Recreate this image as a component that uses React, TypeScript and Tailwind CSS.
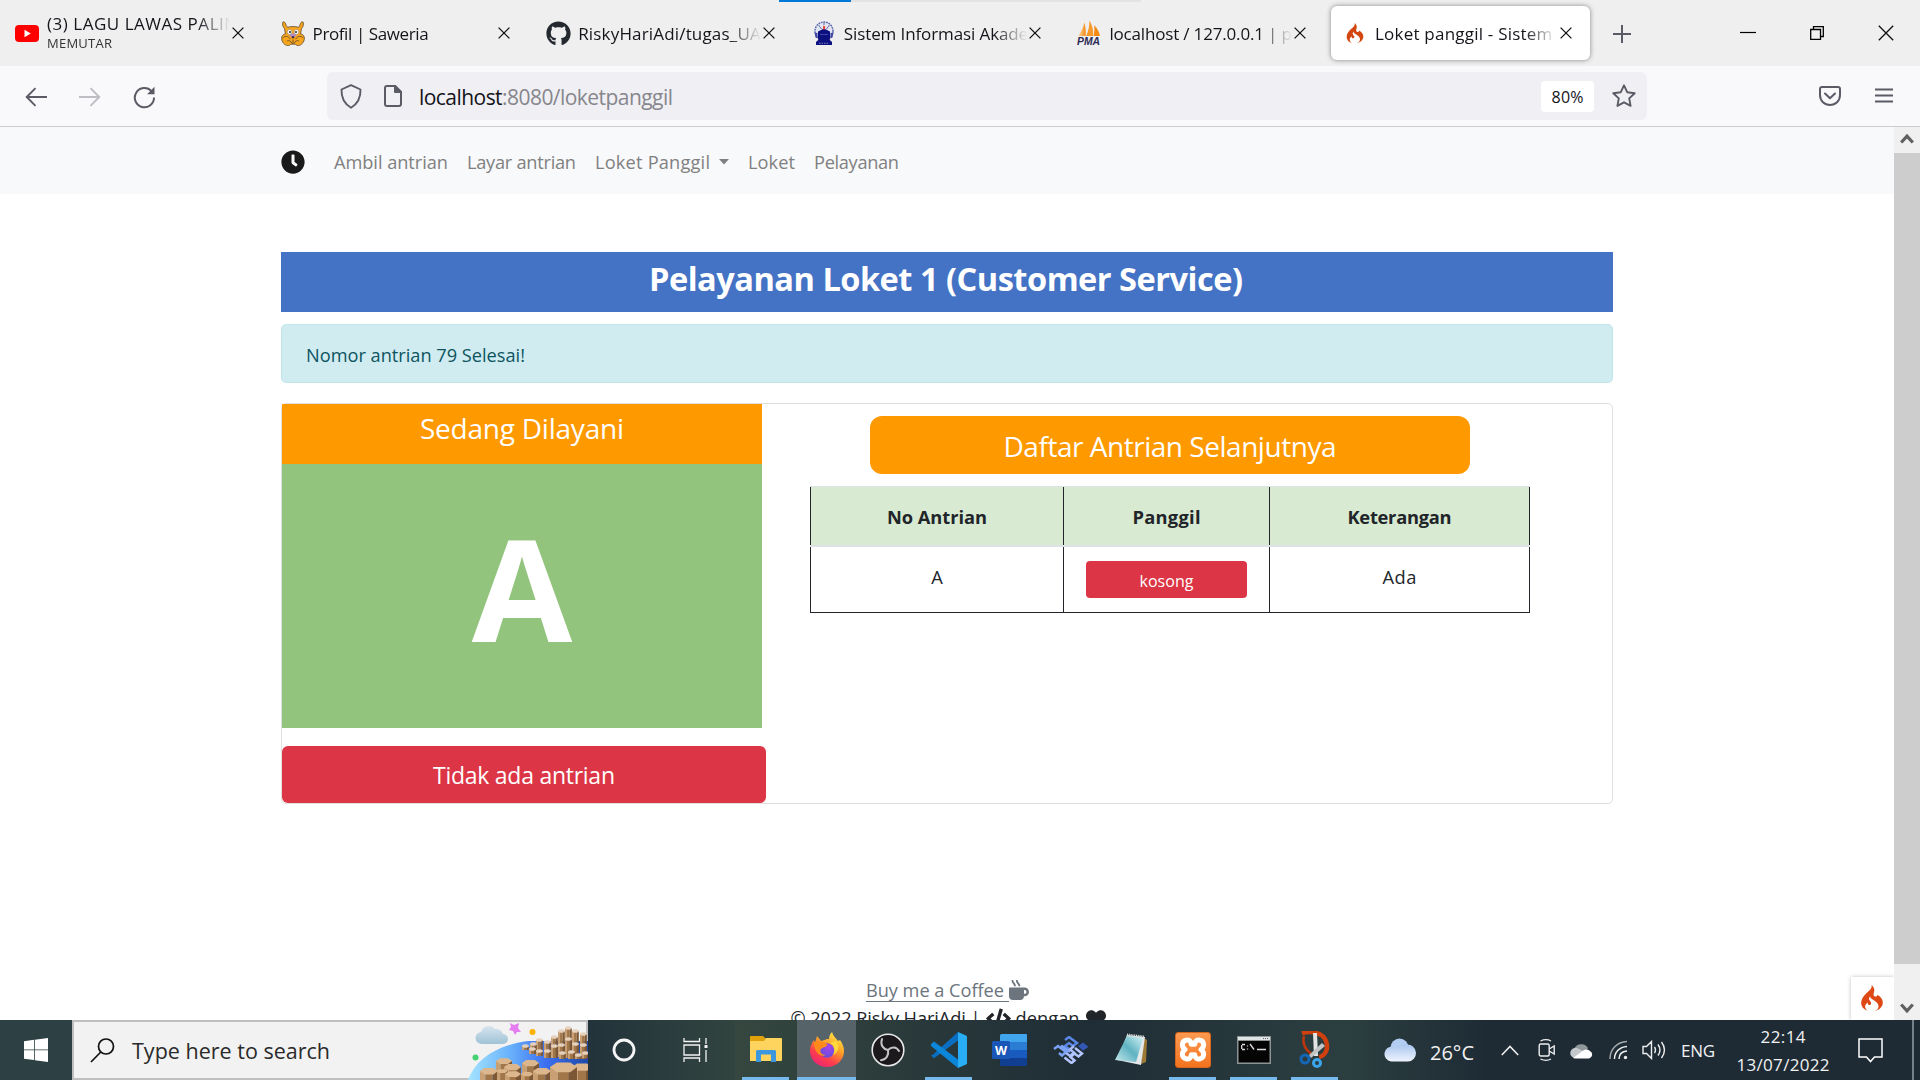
import { useLayoutEffect, useRef, type ReactNode } from "react";
import { FaClock, FaCode, FaGithub, FaHeart, FaMugHot } from "react-icons/fa";
import { SiCodeigniter } from "react-icons/si";

/** A single line of text whose tracking is adjusted so it spans `w` pixels. */
function Line({ w, className = "", children }: { w: number; className?: string; children: ReactNode }) {
  const ref = useRef<HTMLSpanElement>(null);
  useLayoutEffect(() => {
    const el = ref.current;
    if (!el) return;
    el.style.letterSpacing = "0px";
    const n = (el.textContent ?? "").length;
    const natural = el.getBoundingClientRect().width;
    if (n > 1) {
      const gap = (w - natural) / (n - 1);
      el.style.letterSpacing = `${gap}px`;
      el.style.marginRight = `${-gap}px`;
    }
  }, [w]);
  return (
    <span ref={ref} className={`inline-block whitespace-pre ${className}`}>
      {children}
    </span>
  );
}

/* ---------- Browser tabs ---------- */

function CloseX({ size = 12 }: { size?: number }) {
  return (
    <svg width={size} height={size} viewBox="0 0 12 12" fill="none" stroke="#111" strokeWidth={size > 12 ? 1 : 1.3}>
      <path d="M.6.6l10.8 10.8M11.4.6L.6 11.4" />
    </svg>
  );
}

function YoutubeIcon() {
  return (
    <svg width="24" height="17" viewBox="0 0 24 17">
      <rect width="24" height="17" rx="4" fill="#f00" />
      <path d="M9.5 4.8v7.4l6.3-3.7z" fill="#fff" />
    </svg>
  );
}

function SaweriaIcon() {
  return (
    <svg width="24" height="25" viewBox="0 0 24 25">
      <g fill="#f7a51c" stroke="#5e4a2c" strokeWidth=".8" strokeLinejoin="round">
        <path d="M1.800 1.200c1.600-1.200 2.900 1 3.400 3.300l1.300 1.800c3.300-1 7.700-1 11 0l1.300-1.800c.5-2.300 1.800-4.500 3.400-3.300.8 2.400-.4 5.200-1.800 6.600l-.8 5.200c2.400 0 3.900 2.200 3.800 4.600-.2 3.400-3 6.900-6.200 7-1.500 0-2.200-.7-3-1.400h-4.400c-.8.7-1.500 1.400-3 1.400-3.200-.1-6-3.600-6.200-7C.5 15.200 2 13 4.400 13l-.8-5.200C2.200 6.400 1 3.600 1.800 1.200z" />
        <path d="M1.800 17c2.400-2.600 5.800-2 7.600 1.200M22.200 17c-2.400-2.600-5.800-2-7.600 1.200M12 18.500v4.500M6 20c2-1 4 0 5 2.500M18 20c-2-1-4 0-5 2.500" fill="none" />
      </g>
      <path d="M9.500 12.500h5l1 2.300L12 17l-3.500-2.200z" fill="#b68cc4" />
      <circle cx="8.600" cy="11" r="2.400" fill="#fff" stroke="#777" strokeWidth=".5" />
      <circle cx="15.400" cy="11" r="2.400" fill="#fff" stroke="#777" strokeWidth=".5" />
      <circle cx="9" cy="11" r="1.100" fill="#333" />
      <circle cx="15" cy="11" r="1.100" fill="#333" />
      <path d="M10.800 15.200h2.400v2h-2.400z" fill="#3a2438" />
    </svg>
  );
}

function CampusIcon() {
  return (
    <svg width="22" height="24" viewBox="0 0 22 24">
      <circle cx="11" cy="10" r="9" fill="#e3e6f3" stroke="#5a66ac" strokeWidth="1.400" strokeDasharray="1.800 .8" />
      <path d="M5 10.500L11 7.500l6 3v7.500H5z" fill="#0d1180" />
      <path d="M1.500 11.500l3 .5v5.500l-2-1zM20.500 11.500l-3 .5v5.500l2-1z" fill="#4347a4" />
      <path d="M10 8.500l.2-4 2.100 1-.4 3z" fill="#e64632" />
      <path d="M5.500 4l3 4M16.500 4l-3 4M11 1v3" stroke="#59619f" strokeWidth=".9" />
      <path d="M5.500 18h11l1.500 2.500H4zM3 20.500h16V24H3z" fill="#0d1180" />
      <path d="M6 22.300h10" stroke="#9fa3d8" strokeWidth=".7" strokeDasharray="1.500 1" />
      <path d="M7 13.500h8" stroke="#4b50b4" strokeWidth=".8" />
    </svg>
  );
}

function PmaIcon() {
  return (
    <svg width="25" height="26" viewBox="0 0 25 26">
      <defs>
        <linearGradient id="sail" x1="0" x2="1">
          <stop offset="0" stopColor="#fbd9a4" />
          <stop offset="1" stopColor="#f58b14" />
        </linearGradient>
      </defs>
      <path d="M1 16C4.500 12 7 7 7.500 2c1.500 4 1.800 9 1.600 14z" fill="url(#sail)" />
      <path d="M9.500 16C12 10.500 13.200 5 12.800 0c3.200 4.500 4.600 10 3.900 16z" fill="#f79a2d" />
      <path d="M17.200 16c1-4 1.200-8 .6-11 3.400 3 5.400 7 6.200 11z" fill="#f58b14" />
      <text x="0" y="25" fontFamily="Liberation Sans" fontSize="10.500" fontWeight="bold" fontStyle="italic" textLength="24" lengthAdjust="spacingAndGlyphs" fill="#2d2b55">
        PMA
      </text>
    </svg>
  );
}

type TabProps = { icon: ReactNode; title: string; w: number; note?: string; active?: boolean };

function Tab({ icon, title, w, note, active }: TabProps) {
  const fade = active
    ? "[mask-image:linear-gradient(to_right,black_150px,transparent_181px)]"
    : "[mask-image:linear-gradient(to_right,black_150px,transparent_183px)]";
  return (
    <div className="flex h-[66px] w-[265.600px] shrink-0 pt-[6px] pr-[4px] pb-[6px] pl-[3px]">
      <div
        className={`flex w-full items-center rounded-[6px] pl-[12px] ${active ? "bg-white shadow-[0_0_5px_rgba(0,0,0,0.45)]" : ""}`}
      >
        <div className="flex w-[24px] shrink-0 justify-center">{icon}</div>
        <div className={`ml-[8px] w-[183px] shrink-0 overflow-hidden ${fade}`}>
          <div className={`text-[17px] text-[#15141a] ${note ? "-mt-px leading-[22px]" : "pt-px leading-[26px]"}`}>
            <Line w={w}>{title}</Line>
          </div>
          {note && (
            <div className="text-[13px] leading-[17px] text-[#333]">
              <Line w={65}>{note}</Line>
            </div>
          )}
        </div>
        <div className="ml-[2px] shrink-0">
          <CloseX />
        </div>
      </div>
    </div>
  );
}

function TabBar() {
  return (
    <header className="relative flex h-[66px] shrink-0 items-center bg-[#efefef]">
      <div className="absolute top-0 left-[779px] flex h-[2px] w-[362px] bg-[#e3e3e3]">
        <div className="w-[72px] bg-[#0078d7]" />
      </div>
      <Tab icon={<YoutubeIcon />} title="(3) LAGU LAWAS PALING" w={203} note="MEMUTAR" />
      <Tab icon={<SaweriaIcon />} title="Profil | Saweria" w={116} />
      <Tab icon={<FaGithub size={25} color="#24292f" className="shrink-0" />} title="RiskyHariAdi/tugas_UAS" w={192} />
      <Tab icon={<CampusIcon />} title="Sistem Informasi Akademik" w={213} />
      <Tab icon={<PmaIcon />} title="localhost / 127.0.0.1 | php" w={203} />
      <Tab icon={<SiCodeigniter size={20} color="#d3460f" />} title="Loket panggil - Sistem A" w={193} active />
      <svg className="mt-[1px] ml-[18px]" width="20" height="20" viewBox="0 0 20 20" stroke="#5b5b66" strokeWidth="2">
        <path d="M10 1v18M1 10h18" />
      </svg>
      <div className="ml-auto flex items-center pr-[26px]">
        <svg width="16" height="14" viewBox="0 0 16 14" stroke="#000" strokeWidth="1.200">
          <path d="M0 6.500h16" />
        </svg>
        <svg className="ml-[54px]" width="14" height="14" viewBox="0 0 14 14" fill="none" stroke="#000" strokeWidth="1.300">
          <path d="M.7 3.500h9.800v9.800H.7zM3.500 3.500V.7h9.800v9.800h-2.800" />
        </svg>
        <span className="ml-[54px]">
          <CloseX size={16} />
        </span>
      </div>
    </header>
  );
}

function Toolbar() {
  return (
    <div className="flex h-[61px] shrink-0 items-center border-b border-[#cccccf] bg-[#f9f9fb]">
      <div className="flex w-[327px] items-center pt-[2px] pl-[25px]">
        <svg width="22" height="20" viewBox="0 0 22 20" fill="none" stroke="#5b5b66" strokeWidth="1.900">
          <path d="M10.500 1.200L1.700 10l8.800 8.800M2 10h20" />
        </svg>
        <svg className="ml-[32px]" width="22" height="20" viewBox="0 0 22 20" fill="none" stroke="#bdbdc3" strokeWidth="1.900">
          <path d="M11.500 1.200l8.800 8.800-8.800 8.800M20 10H0" />
        </svg>
        <svg className="ml-[32px]" width="23" height="23" viewBox="0 0 23 23" fill="none" stroke="#5b5b66" strokeWidth="2">
          <path d="M18.500 5.200A9.600 9.600 0 1 0 21 11.500" />
          <path d="M21.500.8v7.400h-7.400z" fill="#5b5b66" stroke="none" />
        </svg>
      </div>
      <div className="flex h-[48px] w-[1320px] items-center rounded-[6px] bg-[#f0f0f4] pl-[13px]">
        <svg width="22" height="25" viewBox="0 0 22 25" fill="none" stroke="#5b5b66" strokeWidth="1.900" strokeLinejoin="round">
          <path d="M11 1.200l9.500 4.300c.3 7.600-2.200 13.800-9.500 18.300C3.700 19.300 1.200 13.100 1.500 5.500z" />
        </svg>
        <svg className="ml-[22px]" width="18" height="22" viewBox="0 0 18 22" fill="none" stroke="#5b5b66" strokeWidth="2" strokeLinejoin="round">
          <path d="M3 1h8l6 6v12a2 2 0 0 1-2 2H3a2 2 0 0 1-2-2V3a2 2 0 0 1 2-2z" />
          <path d="M11 1v6h6z" fill="#5b5b66" />
        </svg>
        <div className="ml-[17px] pt-[2px] text-[21px] leading-[30px] text-[#86868c]">
          <Line w={254}>
            <span className="text-[#15141a]">localhost</span>:8080/loketpanggil
          </Line>
        </div>
        <div className="ml-auto flex h-[31px] w-[53px] items-center justify-center rounded-[4px] bg-white pt-[2px] text-[16px] text-[#15141a]">
          <Line w={32}>80%</Line>
        </div>
        <svg className="mr-[11px] ml-[18px]" width="24" height="24" viewBox="0 0 24 24" fill="none" stroke="#5b5b66" strokeWidth="1.900" strokeLinejoin="round">
          <path d="M12 1.300l3.200 6.900 7.500 1-5.500 5.200 1.400 7.500L12 18.300l-6.600 3.600 1.400-7.500L1.300 9.200l7.500-1z" />
        </svg>
      </div>
      <svg className="ml-auto" width="22" height="20" viewBox="0 0 22 20" fill="none" stroke="#5b5b66" strokeWidth="2" strokeLinejoin="round" strokeLinecap="round">
        <path d="M3 1h16a2 2 0 0 1 2 2v6c0 6-4.500 10-10 10S1 15 1 9V3a2 2 0 0 1 2-2z" />
        <path d="M6 7.500l5 4.700 5-4.700" />
      </svg>
      <svg className="mr-[27px] ml-[34px]" width="18" height="16" viewBox="0 0 18 16" stroke="#5b5b66" strokeWidth="1.900">
        <path d="M0 1.500h18M0 7.500h18M0 13.500h18" />
      </svg>
    </div>
  );
}

/* ---------- Page ---------- */

function Navbar() {
  return (
    <nav className="flex h-[67px] shrink-0 items-center bg-[#f8f9fa] pt-[3px] pl-[281px] text-[18.200px] text-[#808081]">
      <FaClock size={24} color="#1a1a1b" />
      <div className="flex items-center pt-[2px]">
        <a className="ml-[29px] w-[114px]"><Line w={114}>Ambil antrian</Line></a>
        <a className="ml-[19px] w-[109px]"><Line w={109}>Layar antrian</Line></a>
        <a className="ml-[19px] flex w-[134px] items-center">
          <Line w={115}>Loket Panggil</Line>
          <svg className="-mt-[2px] ml-[9px] shrink-0" width="10" height="6" viewBox="0 0 10 6" fill="#808081">
            <path d="M0 0h10L5 5.500z" />
          </svg>
        </a>
        <a className="ml-[19px] w-[47px]"><Line w={47}>Loket</Line></a>
        <a className="ml-[19px] w-[85px]"><Line w={85}>Pelayanan</Line></a>
      </div>
    </nav>
  );
}

function ServingPanel() {
  return (
    <section className="flex w-[484px] shrink-0 flex-col">
      <div className="h-[60px] w-[480px] bg-[#ff9900] text-center text-[28px] leading-[49px] text-white">
        <Line w={204}>Sedang Dilayani</Line>
      </div>
      <div className="flex h-[264px] w-[480px] items-center justify-center bg-[#93c47d] pb-[18px] text-[142px] leading-none font-bold text-white">
        <span className="scale-x-[1.025]">A</span>
      </div>
      <button className="mt-[18px] flex h-[57px] w-[484px] items-center justify-center rounded-[6px] bg-[#dc3545] pt-[2px] text-[23px] text-white">
        <Line w={182}>Tidak ada antrian</Line>
      </button>
    </section>
  );
}

function QueueTable() {
  return (
    <section className="flex flex-col pt-[12px] pl-[44px]">
      <div className="ml-[60px] flex h-[58px] w-[600px] items-center justify-center rounded-[12px] bg-[#ff9900] pt-[2px] text-[28px] text-white">
        <Line w={333}>Daftar Antrian Selanjutnya</Line>
      </div>
      <div className="mt-[12px] grid w-[720px] grid-cols-[253px_206px_261px] text-center text-[18.300px] text-[#212529]">
        {[
          { t: "No Antrian", w: 100, b: "border-l" },
          { t: "Panggil", w: 68, b: "border-l" },
          { t: "Keterangan", w: 104, b: "border-x" },
        ].map((c) => (
          <div key={c.t} className="border-t border-b-2 border-[#dee2e6]">
            <div className={`h-[58px] border-[#212529] bg-[#d9ead3] font-bold leading-[60px] ${c.b}`}>
              <Line w={c.w}>{c.t}</Line>
            </div>
          </div>
        ))}
        <div className="h-[66px] border-b border-l border-[#212529] leading-[60px]">A</div>
        <div className="flex h-[66px] justify-center border-b border-l border-[#212529] pt-[14px]">
          <button className="flex h-[37px] w-[161px] items-center justify-center rounded-[4px] bg-[#dc3545] pt-[2px] text-[16px] text-white">
            <Line w={54}>kosong</Line>
          </button>
        </div>
        <div className="h-[66px] border-x border-b border-[#212529] leading-[60px]">
          <Line w={34}>Ada</Line>
        </div>
      </div>
    </section>
  );
}

function Page() {
  return (
    <div className="relative flex min-w-0 flex-1 flex-col overflow-hidden bg-white">
      <Navbar />
      <main className="ml-[281px] flex h-[611px] w-[1332px] shrink-0 flex-col pt-[58px]">
        <h2 className="h-[60px] shrink-0 bg-[#4472c4] pr-[2px] text-center text-[32.600px] leading-[53px] font-bold text-white">
          <Line w={594}>Pelayanan Loket 1 (Customer Service)</Line>
        </h2>
        <div className="mt-[12px] flex h-[59px] shrink-0 items-center rounded-[5px] border border-[#bee5eb] bg-[#d1ecf1] pt-[4px] pl-[24px] text-[18.200px] text-[#0c5460]">
          <Line w={219}>Nomor antrian 79 Selesai!</Line>
        </div>
        <div className="mt-[20px] flex h-[401px] shrink-0 rounded-[5px] border border-[#dfdfdf]">
          <ServingPanel />
          <QueueTable />
        </div>
      </main>
      <footer className="mt-[170px] flex flex-col items-center text-[18.200px] leading-[29px] text-[#212529]">
        <div className="flex h-[29px] items-center pl-px text-[#6c757d]">
          <a className="h-[25px] w-[143px] border-b border-[#6c757d] leading-[27px]">
            <Line w={138}>Buy me a Coffee</Line>
          </a>
          <FaMugHot size={20} />
        </div>
        <div className="flex h-[29px] items-center pl-[2px]">
          <Line w={190}>© 2022 Risky HariAdi |</Line>
          <FaCode size={25} className="mt-[-1px] ml-[5px]" />
          <Line w={64} className="ml-[5px]">dengan</Line>
          <FaHeart size={20} className="ml-[6px]" />
        </div>
      </footer>
      <div className="absolute right-0 bottom-0 flex h-[43px] w-[43px] justify-center bg-white pt-[8px] pr-[2px] shadow-[0_0_4px_rgba(0,0,0,0.25)]">
        <SiCodeigniter size={26} color="#dd4814" />
      </div>
    </div>
  );
}

function Scrollbar() {
  return (
    <div className="flex w-[26px] shrink-0 flex-col items-center bg-[#f0f0f0]">
      <svg className="h-[26px] shrink-0" width="14" height="26" viewBox="0 0 14 26" fill="none" stroke="#606060" strokeWidth="3.200">
        <path d="M1.200 15.500L7 9.200l5.800 6.300" />
      </svg>
      <div className="h-[811px] w-full bg-[#cdcdcd]" />
      <svg className="mt-auto" width="14" height="26" viewBox="0 0 14 26" fill="none" stroke="#606060" strokeWidth="3.200">
        <path d="M1.200 10.500L7 16.800l5.800-6.300" />
      </svg>
    </div>
  );
}

/* ---------- Taskbar ---------- */

function Column({ x, y, s, h }: { x: number; y: number; s: number; h: number }) {
  return (
    <g transform={`translate(${x} ${y})`}>
      <path d={`M0 0h${s * 0.3}v${h}H0z`} fill="#c99f74" />
      <path d={`M${s * 0.3} 0h${s * 0.4}v${h}h${-s * 0.4}z`} fill="#a1774a" />
      <path d={`M${s * 0.7} 0h${s * 0.3}v${h}h${-s * 0.3}z`} fill="#7b5735" />
      <path
        d={`M0 0L${s * 0.25} ${-s * 0.17}h${s * 0.5}L${s} 0L${s * 0.75} ${s * 0.19}h${-s * 0.5}z`}
        fill={s < 10 ? "#e6d2bf" : "#dcb78d"}
        stroke={s < 10 ? "#e6d2bf" : "none"}
        strokeWidth=".8"
      />
    </g>
  );
}

const farColumns: [number, number, number][] = [
  [105, 8, 30], [98, 11, 24], [112, 11, 28], [91, 17, 20], [120, 14, 25], [76, 20, 14], [84, 22, 14],
  [70, 24, 10], [105, 19, 16], [98, 25, 12], [112, 24, 13], [120, 25, 13], [91, 26, 12], [62, 26, 4], [69, 29, 5],
  [76, 31, 5], [84, 31, 7], [99, 33, 6], [108, 32, 7], [115, 35, 4], [122, 33, 5],
];
const nearColumns: [number, number, number][] = [
  [36, 41, 16], [62, 43, 17], [44, 47, 17], [20, 51, 18], [37, 51, 11], [112, 47, 20],
  [45, 54, 16], [61, 54, 12], [73, 51, 18], [90, 47, 27],
];

function SearchArt() {
  return (
    <svg width="132" height="60" viewBox="0 0 132 60">
      <defs>
        <linearGradient id="sea" x1="0" y1="0" x2="1" y2="0">
          <stop offset="0" stopColor="#a5e4ff" />
          <stop offset=".35" stopColor="#69b2fb" />
          <stop offset=".65" stopColor="#3c6ff0" />
          <stop offset="1" stopColor="#1f4aa8" />
        </linearGradient>
        <linearGradient id="mist" x1="0" y1="0" x2="0" y2="1">
          <stop offset="0" stopColor="#d7e4ee" />
          <stop offset="1" stopColor="#9fc3d6" />
        </linearGradient>
      </defs>
      <path d="M8 60C16 38 38 25 68 21h60v39z" fill="url(#sea)" />
      <path d="M22 24a6 6 0 0 1-1-12 8 8 0 0 1 14-3 7 7 0 0 1 8 5 5 5 0 0 1 0 10z" fill="url(#mist)" />
      <path d="M50 3l4 2 5-2-1 5 3 4-4 0-2 3-2-4-4-1 2-3z" fill="#e57cf0" />
      <circle cx="72.500" cy="12" r="3" fill="#ffb000" />
      <circle cx="15.500" cy="37.500" r="3" fill="#46d272" />
      <svg width="128" height="60" viewBox="0 0 128 60">
        {farColumns.map(([x, y, h]) => (
          <Column key={`${x}-${y}`} x={x} y={y} s={6.8} h={h} />
        ))}
        {nearColumns.map(([x, y, s]) => (
          <Column key={`${x}-${y}`} x={x} y={y} s={s} h={60} />
        ))}
      </svg>
    </svg>
  );
}

const ExplorerIcon = () => (
  <svg width="32" height="27" viewBox="0 0 32 27">
    <path d="M0 1a1 1 0 0 1 1-1h12l3 3v4H0z" fill="#e0a10a" />
    <path d="M0 5h14l2-3h15a1 1 0 0 1 1 1v21a1 1 0 0 1-1 1H0z" fill="#fed45f" />
    <path d="M6 26V15.500a1.500 1.500 0 0 1 1.500-1.500h17a1.500 1.500 0 0 1 1.500 1.500V26h-5v-7.500H11V26z" fill="#3b97de" />
  </svg>
);

const FirefoxIcon = () => (
  <svg width="34" height="35" viewBox="0 0 34 35">
    <defs>
      <linearGradient id="fox" x1=".8" y1="0" x2=".2" y2="1">
        <stop offset="0" stopColor="#fff04a" />
        <stop offset=".4" stopColor="#ff9a26" />
        <stop offset=".7" stopColor="#ff3d4d" />
        <stop offset="1" stopColor="#e5227a" />
      </linearGradient>
      <radialGradient id="globe" cx=".6" cy=".3" r=".8">
        <stop offset="0" stopColor="#a646e8" />
        <stop offset="1" stopColor="#5a4fd8" />
      </radialGradient>
    </defs>
    <path d="M22 0c1 4 4 6 6 9l2-1c3 4 4 8 4 11 0 9-7.500 16-17 16S0 28 0 19c0-4 1.500-8 4-11l1 3 2-7 4 5c4-1 5-2 8-2 0-3 1-5 3-7z" fill="url(#fox)" />
    <circle cx="17" cy="18.500" r="7.300" fill="url(#globe)" />
    <path d="M4 10c5-2 9 1 13 2 1 3-4 3-6 5-2 3 1 6 5 6-6 3-12-3-12-13z" fill="#ff8a1c" />
    <path d="M20 11c4 2 6 7 3 12 6-3 7-10 3-14z" fill="#ffd83d" />
  </svg>
);

const ObsIcon = () => (
  <svg width="34" height="34" viewBox="0 0 34 34">
    <circle cx="17" cy="17" r="15.800" fill="#1c191c" stroke="#e8e8e8" strokeWidth="1.600" />
    <g fill="none" stroke="#c4c4c6" strokeWidth="2" strokeLinecap="round">
      <path d="M17 17C12 16 9 12 11 6" />
      <path d="M17 17c3.500-3.700 8.500-3.500 11 1" />
      <path d="M17 17c1 5-1.500 9.500-7 10.200" />
    </g>
  </svg>
);

const VscodeIcon = () => (
  <svg width="36" height="36" viewBox="0 0 36 36">
    <path d="M0 23.500l3 2.800L27 8.500V0L2.500 22.200z" fill="#0a6fc2" />
    <path d="M0 12l3-2.500L27 27.500V36L0 14z" fill="#0c86d8" />
    <path d="M27 0l8 3.500a1.500 1.500 0 0 1 1 1.500v26a1.500 1.500 0 0 1-1 1.500L27 36z" fill="#29aef5" />
  </svg>
);

const WordIcon = () => (
  <svg width="35" height="32" viewBox="0 0 35 32">
    <path d="M8 1.500A1.500 1.500 0 0 1 9.500 0H34a1 1 0 0 1 1 1v7H8z" fill="#41a5ee" />
    <path d="M8 8h27v8H8z" fill="#2b7cd3" />
    <path d="M8 16h27v8H8z" fill="#185abd" />
    <path d="M8 24h27v7a1 1 0 0 1-1 1H9.500A1.500 1.500 0 0 1 8 30.500z" fill="#103f91" />
    <rect y="7" width="18" height="18" rx="1.500" fill="#1a56b8" />
    <text x="9" y="20.500" textAnchor="middle" fontFamily="Open Sans" fontSize="12.500" fontWeight="bold" fill="#fff">W</text>
  </svg>
);

const TracerIcon = () => (
  <svg width="36" height="28" viewBox="0 0 36 28" fill="none" strokeWidth="2.500">
    <path d="M12 4l4-3 8 6-4 3-4-3-4 3 4 3" stroke="#5c86e6" />
    <path d="M1 13l4-3 8 6-4 3.500-3-2.500M8 9.500l9 6.500" stroke="#7ba2f5" />
    <path d="M21 10l-4 3.500 4 3-4 3.500-4-3" stroke="#a9bdfb" />
    <path d="M22 12l7 5.500-3.500 3-4-3-4 3.500 4 3.500-3 2.500-7-5.500" stroke="#b4c6ff" />
    <path d="M25 10l5-3.500 5.500 4.200-5.500 4z" fill="#3357b5" />
  </svg>
);

const NotepadIcon = () => (
  <svg width="33" height="33" viewBox="0 0 33 33">
    <defs>
      <linearGradient id="paper" x1="1" y1="0" x2="0" y2="1">
        <stop offset="0" stopColor="#d6f3f6" />
        <stop offset=".5" stopColor="#5fb3c2" />
        <stop offset="1" stopColor="#c9e8ec" />
      </linearGradient>
    </defs>
    <path d="M29 5l3 2-1 22-5 2z" fill="#9c7a35" />
    <path d="M12 2l18 2-4 28L2 27z" fill="#e4e8ea" />
    <path d="M12 3l16 2-7 24L0 27z" fill="url(#paper)" />
    <path d="M12 1.800l17 2" stroke="#ddd" strokeWidth="2.600" strokeDasharray="1 .8" />
  </svg>
);

const XamppIcon = () => (
  <div className="flex h-[36px] w-[36px] items-center justify-center rounded-[3px] border border-[#d9641c] bg-linear-to-b from-[#fb9a50] to-[#f4731c]">
    <svg width="28" height="25" viewBox="0 0 28 25" fill="none" stroke="#fff" strokeWidth="5" strokeLinejoin="round" strokeLinecap="round">
      <path d="M7 3.200c3-.8 5 .8 5.300 4h3.400c.3-3.200 2.300-4.800 5.300-4 4.400 1 4.800 6.500 1 9.300 3.800 2.800 3.400 8.300-1 9.300-3 .8-5-.8-5.300-4h-3.400c-.3 3.200-2.300 4.800-5.300 4-4.400-1-4.800-6.500-1-9.300-3.800-2.800-3.400-8.300 1-9.300z" />
    </svg>
  </div>
);

const TerminalIcon = () => (
  <svg width="34" height="28" viewBox="0 0 34 28">
    <rect width="34" height="28" fill="#8e9496" />
    <rect x="1" y="1" width="32" height="3" fill="#dfe4e6" />
    <rect x="1.500" y="5" width="31" height="21.500" fill="#050505" />
    <path d="M4.700 9v4M5 8.500h3M5 13.500h3M10.500 9.500v1M10.500 12.500v1M13 8l4 5.500M20 13.500h9" stroke="#ddd" strokeWidth="1.300" />
    <path d="M26 2.500h5" stroke="#667" strokeDasharray="1 1" />
  </svg>
);

const SnipIcon = () => (
  <svg width="31" height="37" viewBox="0 0 31 37" fill="none">
    <path d="M3 2.500C12-1 24 2 27 10c3 8-1 15-7 16" stroke="#d0400f" strokeWidth="4.500" />
    <path d="M5 5c-2 7 1 14 8 18" stroke="#b9360d" strokeWidth="2.500" />
    <path d="M14 2l4 0 1 23-4 0z" fill="#e4e4e4" />
    <path d="M23 12l3 3-14 12-2-3z" fill="#c2c4c6" />
    <circle cx="6" cy="28" r="4" stroke="#1467b8" strokeWidth="3" />
    <circle cx="18" cy="32" r="3.500" stroke="#3aa5ea" strokeWidth="3" />
  </svg>
);

const apps: { name: string; icon: ReactNode; open?: boolean; active?: boolean }[] = [
  { name: "explorer", icon: <ExplorerIcon />, open: true },
  { name: "firefox", icon: <FirefoxIcon />, active: true },
  { name: "obs", icon: <ObsIcon /> },
  { name: "vscode", icon: <VscodeIcon />, open: true },
  { name: "word", icon: <WordIcon /> },
  { name: "tracer", icon: <TracerIcon /> },
  { name: "notepad", icon: <NotepadIcon /> },
  { name: "xampp", icon: <XamppIcon />, open: true },
  { name: "terminal", icon: <TerminalIcon />, open: true },
  { name: "snip", icon: <SnipIcon />, open: true },
];

function Tray() {
  return (
    <div className="flex h-full flex-1 items-center justify-end bg-linear-to-r from-[#2c3f40] to-[#1e2b35] to-25% text-[17px] text-[#f2f2f2]">
      <svg width="34" height="24" viewBox="0 0 34 24">
        <defs>
          <linearGradient id="cl" x1="0" y1="0" x2="0" y2="1">
            <stop offset="0" stopColor="#a9c6f0" />
            <stop offset="1" stopColor="#eef3fc" />
          </linearGradient>
        </defs>
        <circle cx="16.500" cy="9.500" r="9" fill="#b3ccf2" />
        <path d="M8 23.500a7.500 7.500 0 1 1 2-15c3 0 5 1 6 3 2-4 5-5 8-5a8.500 8.500 0 0 1 1 17z" fill="url(#cl)" />
      </svg>
      <div className="mt-[5px] ml-[13px] w-[44px] text-[20px]"><Line w={44}>26°C</Line></div>
      <svg className="ml-[27px]" width="18" height="11" viewBox="0 0 18 11" fill="none" stroke="#eee" strokeWidth="1.600">
        <path d="M.8 10L9 1.500l8.200 8.500" />
      </svg>
      <svg className="ml-[19px]" width="18" height="24" viewBox="0 0 18 24" fill="none" stroke="#eee" strokeWidth="1.400">
        <rect x="1.200" y="6" width="10" height="12" rx="1.500" />
        <path d="M11.200 11l5-3v8l-5-3M2.500 3Q8 .2 13 3M2.500 21q5.500 2.800 10.500 0" />
      </svg>
      <svg className="ml-[13px]" width="24" height="17" viewBox="0 0 24 17">
        <path d="M5 9a7.500 7.500 0 0 1 14-3l-4 6z" fill="#8f979b" />
        <path d="M5 16A5.200 5.200 0 1 1 8 6l10 5-12 5z" fill="#c4c8ca" />
        <path d="M4 16l11-8a6 6 0 0 1 6 1 4 4 0 0 1-1 7.500H6z" fill="#fff" />
      </svg>
      <svg className="ml-[16px]" width="19" height="20" viewBox="0 0 19 20" fill="none" stroke="#eee" strokeWidth="1.500">
        <path d="M1 19C1 9 8 2 18 1.500" opacity=".65" />
        <path d="M5.500 19c0-7 5-12 12.500-12.500M10 19c0-4.500 3-7.500 8-8" />
        <circle cx="16.500" cy="17.500" r="1.700" fill="#eee" stroke="none" />
      </svg>
      <svg className="ml-[14px]" width="24" height="20" viewBox="0 0 24 20" fill="none" stroke="#eee" strokeWidth="1.400">
        <path d="M1 6.500h3.500L9.500 1.500v17l-5-5H1zM12.500 7c1.300 2 1.300 4 0 6M16 4.500c2.500 3.500 2.500 7.500 0 11M19.500 2c3.700 5 3.700 11 0 16" />
      </svg>
      <div className="mt-[1px] ml-[15px] w-[34px]"><Line w={34}>ENG</Line></div>
      <div className="ml-[20px] flex w-[96px] flex-col items-center pt-[2px] leading-[28px]">
        <Line w={45}>22:14</Line>
        <Line w={93}>13/07/2022</Line>
      </div>
      <svg className="ml-[27px]" width="25" height="25" viewBox="0 0 25 25" fill="none" stroke="#fff" strokeWidth="1.500">
        <path d="M1 1h23v18h-7.500L12.500 23.500 8.500 19H1z" />
      </svg>
      <div className="mr-[6px] ml-[29px] h-full w-[2px] bg-[#75808a]" />
    </div>
  );
}

function Taskbar() {
  return (
    <footer className="flex h-[60px] shrink-0 bg-[#1e2b35]">
      <div className="flex w-[72px] shrink-0 items-center justify-center bg-[#2d4043]">
        <svg width="24" height="24" viewBox="0 0 24 24" fill="#fff">
          <path d="M0 3.200l10-1.400v9.700H0zM10.800 1.700L24 0v11.500H10.800zM0 12.300h10v9.700L0 20.700zM10.800 12.300H24V24l-13.200-1.800z" />
        </svg>
      </div>
      <div className="relative flex h-[60px] w-[516px] shrink-0 items-center border-2 border-[#bfbfbf] bg-[#f2f2f2] pl-[16px]">
        <svg width="25" height="25" viewBox="0 0 25 25" fill="none" stroke="#111" strokeWidth="1.700">
          <circle cx="16" cy="8.500" r="7.500" />
          <path d="M10.800 14L1 24" />
        </svg>
        <div className="ml-[17px] pt-[3px] text-[21.500px] text-[#2a2a2a]">
          <Line w={198}>Type here to search</Line>
        </div>
        <div className="absolute -top-[2px] -right-[6px]">
          <SearchArt />
        </div>
      </div>
      <div className="flex w-[147px] shrink-0 items-center bg-linear-to-r from-[#22333b] to-[#32443f] pl-[24px]">
        <svg width="24" height="24" viewBox="0 0 24 24" fill="none" stroke="#f5f5f5" strokeWidth="2.800">
          <circle cx="12" cy="12" r="10" />
        </svg>
        <svg className="ml-[47px]" width="25" height="24" viewBox="0 0 25 24" fill="none" stroke="#f2f2f2" strokeWidth="1.300">
          <path d="M1 0v3.500h15.500V0M1 24v-4h15.500v4M1 7h15.500v10H1zM23 0v6M23 12v12" />
          <path d="M21.500 7h3v3h-3z" fill="#f2f2f2" stroke="none" />
        </svg>
      </div>
      <div className="flex shrink-0 bg-linear-to-r from-[#35473f] via-[#1f2d36] via-58% to-[#2c3f40]">
        {apps.map((a) => (
          <div key={a.name} className="flex w-[61px] justify-center">
            <div
              className={`flex h-[60px] items-center justify-center border-b-[3px] ${
                a.active ? "w-[59px] border-[#76b9ed] bg-[#56646a]" : a.open ? "w-[47px] border-[#76b9ed]" : "w-[47px] border-transparent"
              }`}
            >
              <div className="pt-[2px]">{a.icon}</div>
            </div>
          </div>
        ))}
      </div>
      <Tray />
    </footer>
  );
}

export default function App() {
  return (
    <div className="flex h-[1080px] w-[1920px] flex-col overflow-hidden bg-white font-['Open_Sans',sans-serif]">
      <TabBar />
      <Toolbar />
      <div className="flex h-[893px] shrink-0">
        <Page />
        <Scrollbar />
      </div>
      <Taskbar />
    </div>
  );
}
